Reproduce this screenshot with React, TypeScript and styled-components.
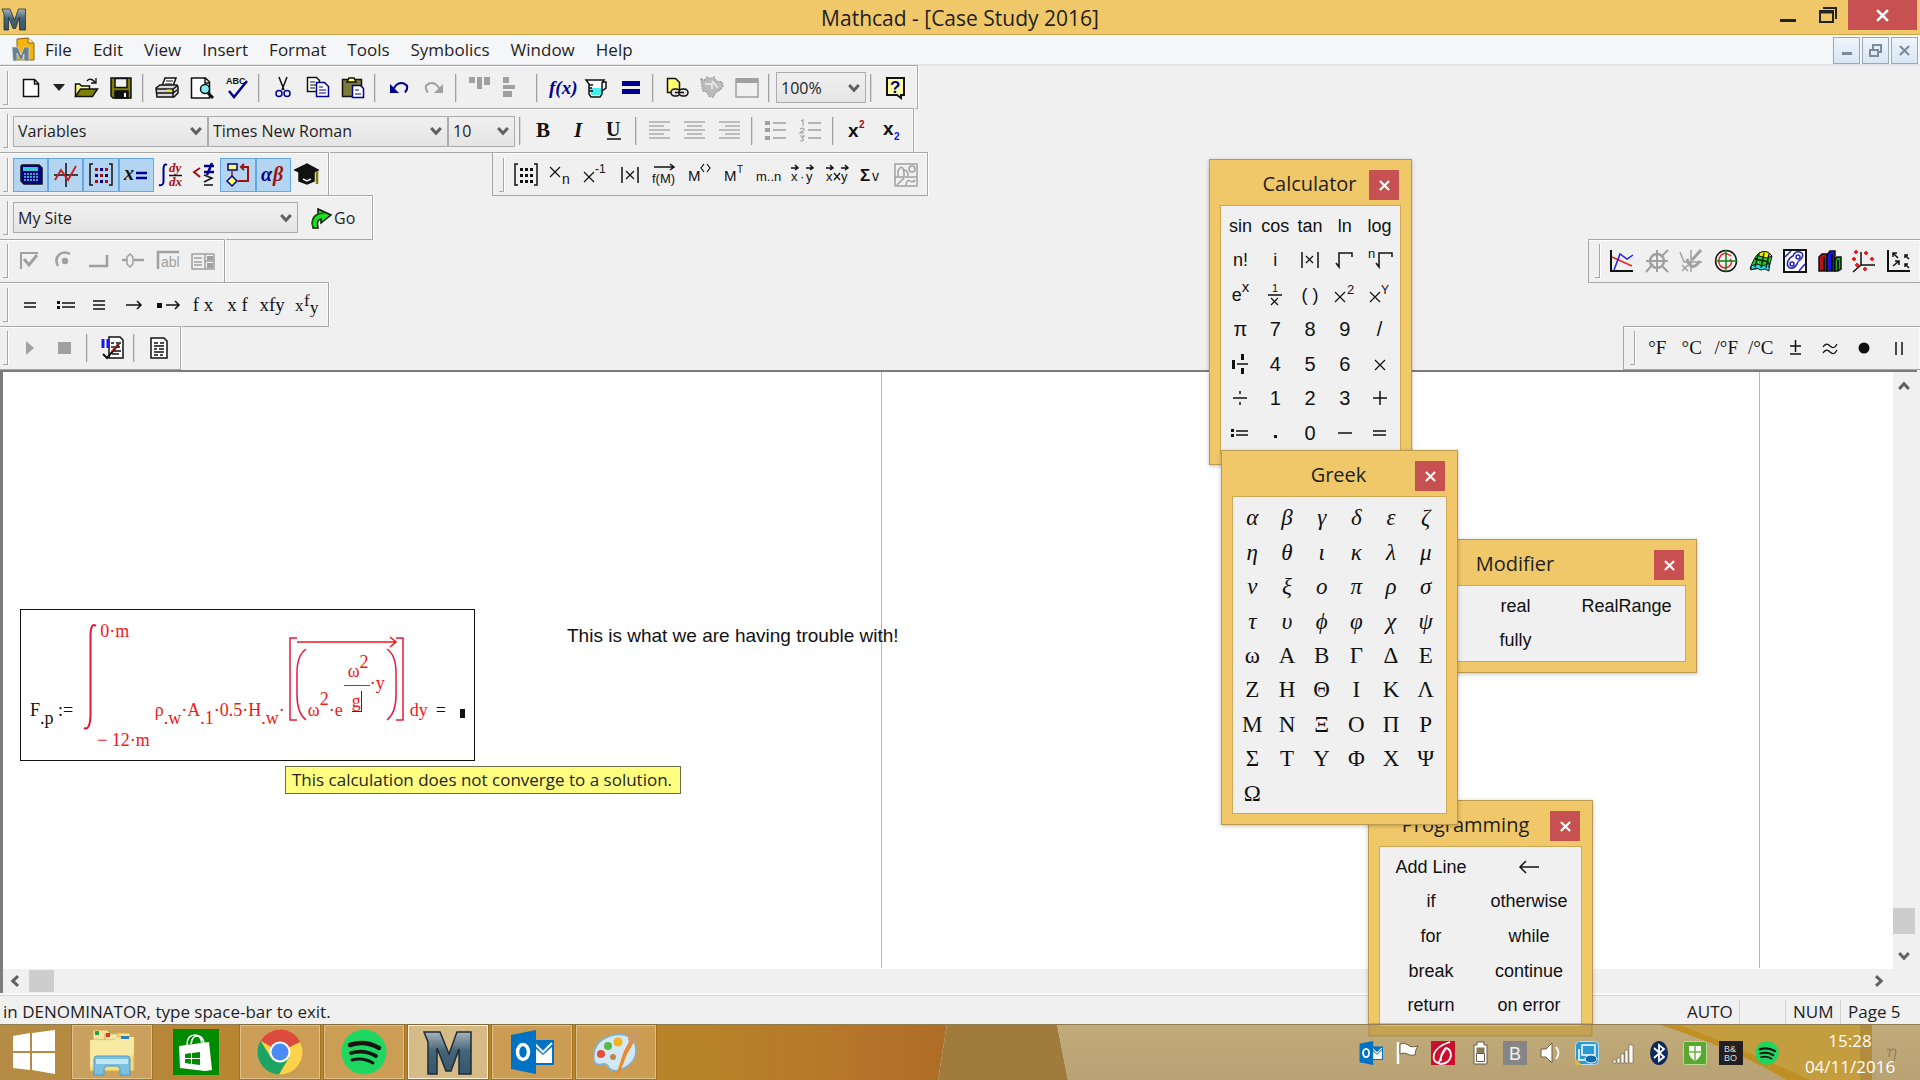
import React from "react";
import styled, { createGlobalStyle, css } from "styled-components";

const ui = `"Open Sans", "Noto Sans", sans-serif`;
const sans = `"Liberation Sans", Arial, sans-serif`;
const serif = `"Liberation Serif", "Times New Roman", serif`;
const gold = "#f0c869";
const face = "#f0f0f0";
const line = "#a6a6a6";

const Global = createGlobalStyle`
  * { box-sizing: border-box; }
  body { margin: 0; font-family: ${ui}; font-size: 17px; color: #1e1e1e; background: ${face}; overflow: hidden; }
  button { font: inherit; color: inherit; border: 0; padding: 0; background: none; }
  svg { display: block; flex: none; overflow: visible; }
`;

/* ---------- shell ---------- */

const Shell = styled.div`
  position: relative;
  display: flex;
  flex-direction: column;
  height: 100vh;
  overflow: hidden;
  background: ${face};
`;

const TitleBar = styled.header`
  display: grid;
  grid-template-columns: 1fr auto 1fr;
  height: 35px;
  flex: none;
  background: ${gold};
  border-bottom: 1px solid #c9a450;
`;

const TitleLogo = styled.div`
  padding: 7px 2px;
`;

const Title = styled.h1`
  margin: 0;
  font-size: 21px;
  font-weight: 400;
  line-height: 36px;
`;

const WindowButtons = styled.div`
  display: flex;
  justify-content: flex-end;
  padding-right: 3px;
`;

const WindowButton = styled.button<{ $close?: boolean }>`
  display: flex;
  align-items: center;
  justify-content: center;
  width: ${(p) => (p.$close ? 69 : 40)}px;
  height: 30px;
  background: ${(p) => (p.$close ? "#c75050" : "transparent")};
`;

const MenuBar = styled.nav`
  display: flex;
  align-items: center;
  gap: 21px;
  flex: none;
  height: 31px;
  padding: 1px 2px 0 12px;
  background: #f5f6f8;
  border-bottom: 2px solid #e4e5e8;
`;

const MenuItem = styled.button`
  line-height: 26px;
`;

const MenuIcon = styled.span`
  margin-right: -11px;
`;

const MdiButtons = styled.div`
  display: flex;
  gap: 2px;
  margin-left: auto;
`;

const MdiButton = styled.button`
  display: flex;
  align-items: center;
  justify-content: center;
  width: 27px;
  height: 27px;
  background: linear-gradient(#eef5fc, #d8e6f4);
  border: 1px solid #9aa9b8;
`;

/* ---------- toolbars ---------- */

const ToolArea = styled.div`
  display: grid;
  grid-template-rows: repeat(7, 1fr);
  height: 304px;
  flex: none;
`;

const ToolRow = styled.div`
  display: flex;
`;

const Toolbar = styled.div<{ $docked?: "left" | "right"; $indent?: number; $end?: number }>`
  display: flex;
  align-items: center;
  margin-top: -1px;
  margin-left: ${(p) => (p.$docked === "right" ? "auto" : `${p.$indent ?? 0}px`)};
  padding: 1px ${(p) => p.$end ?? 4}px 0 ${(p) => (p.$docked || p.$indent ? 6 : 3)}px;
  border: 1px solid ${line};
  border-left-width: ${(p) => (p.$docked || p.$indent ? 1 : 0)}px;
  border-right-width: ${(p) => (p.$docked === "right" ? 0 : 1)}px;
  box-shadow: inset 0 1px #fff, inset -1px 0 #f8f8f8, 1px 0 #fff;
`;

const Grip = styled.span`
  width: 5px;
  height: 34px;
  margin-right: 5px;
  flex: none;
  border: solid ${line};
  border-width: 0 1px 1px 0;
  box-shadow: 1px 0 #fff;
`;

const Divider = styled.span`
  width: 2px;
  height: 28px;
  margin: 0 6px 0 4px;
  flex: none;
  background: #a0a0a0;
  border-right: 1px solid #d8d8d8;
`;

const Group = styled.div<{ $count: number }>`
  display: flex;
  width: ${(p) => Math.round(p.$count * 34.5)}px;
`;

const Tool = styled.button<{ $on?: boolean }>`
  display: flex;
  align-items: center;
  justify-content: center;
  flex: 1 1 0;
  min-width: 0;
  height: 34px;
  white-space: nowrap;
  font: 19px/24px ${serif};
  color: #111;
  ${(p) =>
    p.$on &&
    css`
      background: #b3d5f2;
      border: 1px solid #63a8e6;
    `}
`;

const NarrowTool = styled.button`
  display: flex;
  justify-content: center;
  width: 21px;
`;

const GoButton = styled.button`
  display: flex;
  align-items: center;
  gap: 1px;
  margin-left: 11px;
  font-size: 16px;
`;

const SelectBox = styled.span<{ $w: number }>`
  display: grid;
  align-items: center;
  width: ${(p) => p.$w}px;
  & > * { grid-area: 1 / 1; }
  & > svg { justify-self: end; margin-right: 6px; pointer-events: none; }
`;

const Select = styled.select`
  appearance: none;
  width: 100%;
  height: 31px;
  margin: 0;
  padding: 0 4px;
  border: 1px solid #acacac;
  border-radius: 0;
  background: linear-gradient(#f0f0f0, #e5e5e5);
  font: 16px/24px ${ui};
  color: #1e1e1e;
`;

/* ---------- worksheet ---------- */

const Work = styled.main`
  display: grid;
  grid-template-columns: 1fr 24px;
  grid-template-rows: 1fr 24px;
  flex: 1;
  min-height: 0;
  margin-right: 3px;
  border: solid #7c7c7c;
  border-width: 2px 0 0 3px;
`;

const Sheet = styled.section`
  position: relative;
  overflow: hidden;
  background: #fff;
`;

const PageEdge = styled.i<{ $x: number }>`
  position: absolute;
  top: 0;
  bottom: 1px;
  left: ${(p) => p.$x}px;
  width: 1px;
  background: #b8b8b8;
`;

const Scroll = styled.div<{ $vertical?: boolean }>`
  display: flex;
  flex-direction: ${(p) => (p.$vertical ? "column" : "row")};
  justify-content: space-between;
  align-items: center;
  padding: ${(p) => (p.$vertical ? "8px 2px 7px 0" : "0 8px 0 6px")};
  background: ${face};
`;

const Thumb = styled.i<{ $vertical?: boolean }>`
  width: ${(p) => (p.$vertical ? 22 : 25)}px;
  height: ${(p) => (p.$vertical ? 26 : 22)}px;
  margin: ${(p) => (p.$vertical ? "auto 0 16px" : "0 auto 0 8px")};
  background: #cdcdcd;
`;

const Note = styled.p`
  position: absolute;
  left: 564px;
  top: 252px;
  margin: 0;
  font: 19px/24px ${sans};
  color: #111;
`;

const Hint = styled.div`
  position: absolute;
  left: 282px;
  top: 394px;
  padding: 0 8px 0 6px;
  border: 1px solid #6d6d4a;
  background: #ffff80;
  line-height: 26px;
  white-space: nowrap;
`;

/* ---------- formula region ---------- */

const Region = styled.div`
  position: absolute;
  left: 17px;
  top: 237px;
  display: flex;
  align-items: flex-end;
  height: 152px;
  padding: 0 9px 40px;
  border: 1px solid #111;
  font: 18px/20px ${serif};
  color: #111;
  white-space: nowrap;
  & sub { font-size: 18px; line-height: 0; vertical-align: -8px; }
  & sup { font-size: 18px; line-height: 0; vertical-align: 11px; }
`;

const Red = styled.span`
  color: #f01818;
`;

const Integral = styled.div`
  display: grid;
  grid-template-columns: 14px auto;
  height: 129px;
  margin: 0 5px -30px 10px;
  color: #f01818;
`;

const Limits = styled.div`
  display: flex;
  flex-direction: column;
  justify-content: space-between;
`;

const Upper = styled.span`
  padding-left: 3px;
`;

const Bracket = styled.div`
  display: grid;
  width: 117px;
  height: 85px;
  margin: 0 5px -2px 3px;
  color: #f01818;
  & > * { grid-area: 1 / 1; }
`;

const Inner = styled.div`
  display: flex;
  align-items: flex-end;
  padding: 0 0 2px 20px;
`;

const Fraction = styled.div`
  display: flex;
  flex-direction: column;
  align-items: center;
  width: 26px;
  margin: 0 0 8px 1px;
`;

const Numerator = styled.span`
  align-self: stretch;
  padding: 0 0 4px 4px;
  border-bottom: 1px solid #f01818;
  & sup { vertical-align: 9px; }
`;

const Denominator = styled.span`
  margin-top: 5px;
  border: solid #1616ff;
  border-width: 0 1px 1px 0;
`;

const Exponent = styled.span`
  margin-bottom: 27px;
`;

const Equals = styled.span`
  margin-left: 8px;
`;

const Slot = styled.i`
  width: 5px;
  height: 9px;
  margin: 0 0 2px 14px;
  background: #111;
`;

/* ---------- status bar ---------- */

const StatusBar = styled.footer`
  display: flex;
  flex: none;
  height: 31px;
  padding: 5px 20px 0 3px;
  border-top: 2px solid #fafafa;
  box-shadow: inset 0 1px #d5d5d5;
  line-height: 24px;
  white-space: nowrap;
`;

const StatusText = styled.span`
  flex: 1;
`;

const StatusCell = styled.span<{ $w: number; $plain?: boolean }>`
  width: ${(p) => p.$w}px;
  padding-left: 7px;
  border-left: 1px solid ${(p) => (p.$plain ? "transparent" : "#cfcfcf")};
`;

/* ---------- palettes ---------- */

const PaletteFrame = styled.section<{ $x: number; $y: number; $w: number; $h: number }>`
  position: absolute;
  left: ${(p) => p.$x}px;
  top: ${(p) => p.$y}px;
  width: ${(p) => p.$w}px;
  height: ${(p) => p.$h}px;
  display: flex;
  flex-direction: column;
  padding: 0 10px 10px;
  background: ${gold};
  border: 1px solid #b99a4e;
  box-shadow: 0 1px 4px rgba(0, 0, 0, 0.25);
`;

const PaletteHead = styled.header<{ $lead: number }>`
  display: grid;
  grid-template-columns: ${(p) => p.$lead}px 1fr 30px;
  align-items: start;
  height: 45px;
  padding: 10px 2px 0;
  flex: none;
`;

const PaletteTitle = styled.h2`
  grid-column: 2;
  margin: 0;
  font-size: 20px;
  font-weight: 400;
  line-height: 28px;
  text-align: center;
`;

const PaletteClose = styled.button`
  display: flex;
  align-items: center;
  justify-content: center;
  height: 30px;
  background: #c75050;
`;

const PaletteBody = styled.div<{ $cols: number }>`
  display: grid;
  grid-template-columns: repeat(${(p) => p.$cols}, 1fr);
  grid-auto-rows: 1fr;
  flex: 1;
  padding: 3px 3px 3px 2px;
  background: ${face};
  border: 1px solid #cfa955;
  font: 18px/24px ${sans};
  color: #111;
`;

const Key = styled.button<{ $face?: "greek" | "italic" | "digit" }>`
  display: flex;
  align-items: center;
  justify-content: center;
  padding-bottom: 1px;
  white-space: nowrap;
  ${(p) => p.$face === "digit" && `font-size: 20px; padding: 0;`}
  ${(p) => (p.$face === "greek" || p.$face === "italic") && `font-family: ${serif}; font-size: 23px; padding: 2px 0 0;`}
  ${(p) => p.$face === "italic" && `font-style: italic;`}
  & sup { font-size: 15px; line-height: 0; vertical-align: 9px; }
`;

/* ---------- taskbar ---------- */

const Taskbar = styled.footer`
  position: relative;
  z-index: 2;
  display: grid;
  height: 56px;
  flex: none;
  & > * { grid-area: 1 / 1; min-width: 0; }
`;

const TaskRow = styled.div`
  display: flex;
  align-items: stretch;
  gap: 4px;
  padding-top: 1px;
  z-index: 1;
`;

const TaskButton = styled.button<{ $state?: "open" | "active" }>`
  display: flex;
  align-items: center;
  justify-content: center;
  width: 80px;
  margin-bottom: 1px;
  ${(p) =>
    p.$state === "open" &&
    css`
      background: rgba(222, 184, 125, 0.5);
      border: 1px solid rgba(235, 215, 175, 0.6);
      box-shadow: 0 0 0 1px rgba(110, 75, 20, 0.3);
    `}
  ${(p) =>
    p.$state === "active" &&
    css`
      background: rgba(224, 204, 166, 0.75);
      border: 1px solid #fbf3e2;
      box-shadow: 0 0 0 1px rgba(110, 75, 20, 0.4);
    `}
`;

const StartButton = styled(TaskButton)`
  width: 68px;
`;

const Tray = styled.div`
  display: flex;
  align-items: center;
  gap: 12px;
  margin: 0 21px 0 auto;
`;

const Clock = styled.time`
  width: 98px;
  margin-left: 10px;
  font-size: 17px;
  line-height: 26px;
  padding-top: 2px;
  text-align: center;
  color: #fff;
`;

/* ---------- drawings ---------- */

type Kids = { children?: React.ReactNode };
const Ic = ({ children }: Kids) => (
  <svg width="24" height="24" viewBox="0 0 24 24" fill="none" stroke="#111" strokeWidth="1.5" aria-hidden="true">
    {children}
  </svg>
);
const T = ({ x, y, s = 14, c = "#111", w = "400", i, f = sans, children }: any) => (
  <text x={x} y={y} fontSize={s} fill={c} stroke="none" fontWeight={w} fontStyle={i ? "italic" : "normal"} fontFamily={f}>
    {children}
  </text>
);
const G = "#a0a0a0";
const NAVY = "#000090";

const Chevron = ({ r = 0, c = "#606060" }: { r?: number; c?: string }) => (
  <svg width="12" height="12" viewBox="0 0 12 12" fill="none" stroke={c} strokeWidth="3" aria-hidden="true">
    <path d="M1.2 3l4.8 5.2L10.800 3" transform={`rotate(${r} 6 6)`} />
  </svg>
);

const MLogo = ({ size, id }: { size: number; id: string }) => (
  <svg width={size} height={size} viewBox="0 0 48 48" aria-hidden="true">
    <defs>
      <linearGradient id={id} x1="0" y1="0" x2="0" y2="1">
        <stop offset="0" stopColor="#a9b5bd" />
        <stop offset=".45" stopColor="#456478" />
        <stop offset="1" stopColor="#36566c" />
      </linearGradient>
    </defs>
    <path d="M0 4h16l9 22 8-22h14v42H35V21l-8 22h-5l-9-23v26H4V14z" fill={`url(#${id})`} stroke="#1c2b36" strokeWidth="1.5" />
  </svg>
);

const NewDoc = () => <Ic><path d="M4.500 3.500h11l4 4v13h-15z" fill="#fff" /><path d="M15.500 3.500v4.500h4" /></Ic>;
const Open = () => <Ic><path d="M1.500 20V8h4l2 2h8v3" fill="#ffff80" /><path d="M1.500 20.500l5-7.500h17l-5 7.500z" fill="#808000" /><path d="M13 5q3-4 8 1m1-4v5h-5" strokeWidth="1.300" /></Ic>;
const Save = () => <Ic><path d="M2 2h20v20H4l-2-2z" fill="#808000" stroke="#111" /><path d="M6 2.500h12v9H6z" fill="#f0f0f0" /><path d="M6 15h13v7H6z" fill="#111" /><path d="M15 17h2v4h-2z" fill="#fff" stroke="none" /></Ic>;
const Print = () => <Ic><path d="M7 10l3-8h11l-3 8z" fill="#fff" /><path d="M11 5h7M10 8h7" strokeWidth="1" /><path d="M1 12l4-3h17l1 2v6l-4 4H2z" fill="#d8d8d8" /><path d="M1 13h17l4-3M2 17h16l4-3M18 13v8" /><path d="M12 14.500h4" stroke="#e6e600" strokeWidth="2" /></Ic>;
const Preview = () => <Ic><path d="M1.500 2h14l4 4v16h-18z" fill="#fff" /><path d="M15 2v5h5" /><circle cx="15" cy="13" r="4.500" fill="#80f0f0" /><path d="M18 17l5 5" strokeWidth="3" /></Ic>;
const Spell = () => <Ic><T x="1" y="8" s="9" w="700">ABC</T><path d="M4 15l5 6L22 5" stroke={NAVY} strokeWidth="2.400" /></Ic>;
const Cut = () => <Ic><path d="M8 1l5 13M16 1l-5 13" /><circle cx="8" cy="17.500" r="3" stroke={NAVY} /><circle cx="16" cy="17.500" r="3" stroke={NAVY} /></Ic>;
const Copy = () => <Ic><path d="M1.500 1.500h9l3 3v11h-12z" fill="#fff" /><path d="M4 6h5M4 9h6M4 12h5" strokeWidth="1" /><path d="M10.500 6.500h8l4 4v10h-12z" fill="#fff" stroke={NAVY} /><path d="M13 11h4M13 14h7M13 17h7" stroke={NAVY} strokeWidth="1" /></Ic>;
const Paste = () => <Ic><path d="M1.500 3.500h19v17h-19z" fill="#7c7c38" /><path d="M6 6l2-4h5l2 4z" fill="#ffff60" /><path d="M11.500 9.500h8l3 3v9h-11z" fill="#fff" stroke={NAVY} /><path d="M14 14h4M14 18h6" stroke={NAVY} strokeWidth="1" /></Ic>;
const Undo = () => <Ic><path d="M6 14Q10 5 17 7.500q6 3 1 9" stroke={NAVY} strokeWidth="2" /><path d="M3 8v9h9z" fill={NAVY} stroke="none" /></Ic>;
const Redo = () => <Ic><path d="M18 14Q14 5 7 7.500q-6 3-1 9" stroke={G} strokeWidth="2" /><path d="M21 8v9h-9z" fill={G} stroke="none" /></Ic>;
const AlignTop = () => <Ic><path d="M1 1h6v6H1zM9 1h5v12H9zM16 1h6v8h-6z" fill={G} stroke="none" /></Ic>;
const AlignLeft = () => <Ic><path d="M0 1h6v6H0zM0 9h12v4H0zM0 15h9v6H0z" fill={G} stroke="none" /></Ic>;
const Fx = () => <Ic><T x="0" y="18" s="19" w="700" c={NAVY} f={serif} i>f(x)</T></Ic>;
const Cup = () => <Ic><path d="M2 4h18l-2 3v11l-2 3H7l-2-3V8z" fill="#fff" /><path d="M6 12h11v7H7z" fill="#40f0f0" stroke="none" /><path d="M18 6h4v6l-4 3M5 9h4M5 12h3M5 15h4" /></Ic>;
const EqualsIcon = () => <Ic><path d="M3 5h18v5H3zM3 13h18v5H3z" fill={NAVY} stroke="none" /></Ic>;
const LinkIcon = () => <Ic><path d="M2.500 2.500h8l4 4v10h-12z" fill="#ffff70" /><rect x="6" y="13" width="9" height="7" rx="3.500" fill="#ddd" /><rect x="14" y="13" width="9" height="7" rx="3.500" fill="#ddd" /><path d="M10 16.500h9" /></Ic>;
const Gear = () => <Ic><path d="M1 3l4 1 2-3 3 2 4-2 2 4 6 1 1 4-3 4-4 2-3 5-4-1-2-4-4-1-1-5z" fill="#bcbcbc" stroke={G} strokeDasharray="2 1" /><path d="M5 8h7v5M12 5l6 7" stroke="#eee" /></Ic>;
const WindowIcon = () => <Ic><path d="M1 3h22v18H1z" stroke={G} /><path d="M1 2h22v5H1z" fill={G} stroke="none" /></Ic>;
const HelpIcon = () => <Ic><path d="M3 2h17v17h-3v3l-4-3H3z" fill="#ffffa0" strokeWidth="2" /><T x="6" y="17" s="17" w="700" c={NAVY}>?</T></Ic>;

const Lines = ({ a }: { a: "l" | "c" | "r" }) => {
  const short = 15;
  const x = a === "l" ? 1 : a === "c" ? 4 : 7;
  return <Ic>{[3, 7, 11, 15, 19].map((y, k) => <path key={y} stroke={G} strokeWidth="1.300" d={k % 2 ? `M${x} ${y}h${short}` : `M1 ${y}h21`} />)}</Ic>;
};
const Bullets = () => <Ic>{[4, 11, 19].map((y) => <path key={y} d={`M1 ${y}h5`} stroke={G} strokeWidth="4" />)}{[4, 11, 19].map((y) => <path key={`l${y}`} d={`M9 ${y}h13`} stroke={G} />)}</Ic>;
const Numbers = () => <Ic><path d="M2 2l2-1v6M1 10q4-2 4 1l-4 3h4M1 17h4l-2 2q4 3-2 3" stroke={G} strokeWidth="1.200" />{[4, 11, 19].map((y) => <path key={y} d={`M9 ${y}h13`} stroke={G} />)}</Ic>;
const Sup = () => <Ic><T x="3" y="18" s="19" w="700">x</T><T x="14" y="9" s="10" w="700" c="#a01010">2</T></Ic>;
const Sub = () => <Ic><T x="3" y="16" s="19" w="700">x</T><T x="14" y="21" s="10" w="700" c="#1010f0">2</T></Ic>;

const CalcIcon = () => <Ic><path d="M3 2h17l3 3v16H5l-3-3V3z" fill="#000080" /><path d="M4 4h15v4H4z" fill="#40c8d0" stroke="none" /><path d="M5 11h15M5 14h15M5 17h15" stroke="#58d8d8" strokeDasharray="2 1" /></Ic>;
const GraphIcon = () => <Ic><path d="M0 12h24M12 0v24" /><path d="M1 17L7 7l7 10 8-14" stroke="#d01818" strokeWidth="1.800" /></Ic>;
const MatrixIcon = ({ c = ["#a01010", NAVY] }: { c?: string[] }) => (
  <Ic><path d="M4 1H1v21h3M20 1h3v21h-3" />{[5, 11, 17].map((y, r) => [6, 11, 16].map((x, k) => <rect key={`${x}${y}`} x={x} y={y} width="3" height="3" stroke="none" fill={c[(r + k) % 2]} />))}</Ic>
);
const XEq = () => <Ic><T x="0" y="17" s="20" w="700" i f={serif}>x</T><path d="M12 10h11M12 15h11" stroke={NAVY} strokeWidth="2.600" /></Ic>;
const Calculus = () => <Ic><path d="M9 2Q6 0 5.500 5v14Q5 23 1 22" stroke={NAVY} strokeWidth="2" /><T x="11" y="9" s="13" w="700" i c="#a01010" f={serif}>dy</T><path d="M11 12.500h13" /><T x="11" y="23" s="13" w="700" i c="#a01010" f={serif}>dx</T></Ic>;
const Bool = () => <Ic><path d="M8 5L2 9l6 5" stroke="#a01010" strokeWidth="2" /><path d="M12 3h10M12 9h10M20 0l-5 12" stroke={NAVY} strokeWidth="2.500" /><path d="M12 12l8 3-8 4M12 22h9" /></Ic>;
const Program = () => <Ic><path d="M2 1h9v6H2z" fill="#ffff60" stroke={NAVY} /><path d="M6 8v5" stroke="#a01010" /><path d="M6 13l5 5-5 5-5-5z" fill="#ffff60" stroke={NAVY} /><path d="M12 18h10V4h-7m3-3l-3 3 3 3" stroke="#a01010" strokeWidth="2" /></Ic>;
const AlphaBeta = () => <Ic><T x="0" y="18" s="20" w="700" i c={NAVY} f={serif}>α</T><T x="12" y="18" s="20" w="700" i c="#a01010" f={serif}>β</T></Ic>;
const Hat = () => <Ic><path d="M0 7l12-6 11 6-11 6z" fill="#111" /><path d="M4 10v8l8 3 7-3v-8l-7 4z" fill="#111" /><path d="M22 8v13" stroke="#808000" strokeWidth="2.500" /><path d="M8 16l4 2 4-2" stroke="#eee" /></Ic>;

const vec = "M1 5h7m-3-3l3 3-3 2";
const matrixTools: [string, React.ReactNode][] = [
  ["Matrix", <MatrixIcon c={["#111", "#111"]} />],
  ["Subscript", <Ic><path d="M1 4l10 10M11 4l-10 10" strokeWidth="1.200" /><T x="13" y="21" s="14">n</T></Ic>],
  ["Inverse", <Ic><path d="M1 9l10 10M11 9l-10 10" strokeWidth="1.200" /><T x="12" y="10" s="12">-1</T></Ic>],
  ["Determinant", <Ic><path d="M4 4v16M20 4v16" /><path d="M8 8l8 8M16 8l-8 8" strokeWidth="1.200" /></Ic>],
  ["Vectorize", <Ic><path d="M2 4h20m-4-3l4 3-4 3" /><T x="0" y="20" s="13">f(M)</T></Ic>],
  ["Column", <Ic><T x="1" y="18" s="15">M</T><path d="M17 1l-3 4 3 4M20 1l3 4-3 4" strokeWidth="1.200" /></Ic>],
  ["Transpose", <Ic><T x="3" y="18" s="15">M</T><T x="16" y="10" s="10">T</T></Ic>],
  ["Range", <Ic><T x="0" y="18" s="13">m..n</T></Ic>],
  ["Dot product", <Ic><path d={vec} /><path d={vec} transform="translate(15)" /><T x="1" y="18" s="13">x</T><T x="10" y="18" s="13">·</T><T x="16" y="18" s="13">y</T></Ic>],
  ["Cross product", <Ic><path d={vec} /><path d={vec} transform="translate(15)" /><T x="1" y="18" s="13">x</T><path d="M9 10l6 7M15 10l-6 7" strokeWidth="1.200" /><T x="16" y="18" s="13">y</T></Ic>],
  ["Vector sum", <Ic><T x="1" y="18" s="17" w="700">Σ</T><T x="13" y="18" s="14">v</T></Ic>],
  ["Picture", <Ic><path d="M1 1h22v22H1zM1 14h22" stroke={G} /><circle cx="18" cy="6" r="3" stroke={G} /><path d="M4 13V8q4-8 6 1v4M10 7q4 0 4 6M3 22l7-7M12 22q1-6 4-4t5-1" stroke={G} /></Ic>],
];

const controlTools: [string, React.ReactNode][] = [
  ["Check box", <Ic><path d="M3 20V4h17" stroke={G} strokeWidth="2" /><path d="M6 10l5 6 8-10" stroke={G} strokeWidth="3" /></Ic>],
  ["Radio", <Ic><path d="M5 17Q1 9 7 5q5-3 10 0" stroke={G} strokeWidth="2.500" /><circle cx="12" cy="12" r="3.200" fill={G} stroke="none" /></Ic>],
  ["Push button", <Ic><path d="M2 17h18V6" stroke={G} strokeWidth="2.500" /></Ic>],
  ["Slider", <Ic><path d="M0 11h5M12 11h10" stroke={G} strokeWidth="2.500" /><path d="M5 8l3-3 3 3v7l-3 3-3-3z" stroke={G} /></Ic>],
  ["Text box", <Ic><path d="M2 20V3h21" stroke={G} strokeWidth="2.500" /><T x="5" y="18" s="14" c={G}>abl</T></Ic>],
  ["List box", <Ic><path d="M1 5h22v15H1zM14 5v15M3 9h8M3 13h8M3 16h8M14 12h9" stroke={G} /><path d="M16 7h6v4h-6zM16 14h6v5h-6z" fill={G} stroke="none" /></Ic>],
];

const graphTools: [string, React.ReactNode][] = [
  ["X-Y plot", <Ic><path d="M1 1v21h22" strokeWidth="2" /><path d="M2 8l20 9" stroke="#f02020" /><path d="M4 21l6-16 7 5 6-4" stroke="#2020f0" /></Ic>],
  ["Zoom graph", <Ic><circle cx="12" cy="12" r="7" stroke={G} strokeWidth="2.500" /><path d="M1 12h22M12 1v22M1 23l7-8M17 17l6 6M17 7l6-6" stroke={G} strokeWidth="2" /></Ic>],
  ["Trace graph", <Ic><path d="M1 3l4 10h18M12 1v22M3 16l6 6M9 16l-6 6" stroke={G} /><path d="M13 11l9-10M8 10q4 14 13 2" stroke={G} strokeWidth="3" /></Ic>],
  ["Polar plot", <Ic><circle cx="12" cy="12" r="10.500" /><path d="M17 7Q8 1 5 10q-1 9 7 9 8-3 4-9" stroke="#f02020" /><path d="M1 12h22M12 1v22" stroke="#108010" /></Ic>],
  ["Surface plot", <Ic><path d="M1 20Q5 8 10 4q8-4 13 3l-3 12-7-2-6 3z" fill="#20d020" strokeWidth="1" /><path d="M10 4q8-4 13 3l-5 2-8-2z" fill="#f0f000" strokeWidth="1" /><path d="M2 17l6-2 6 2 6-3v8l-4-2-4 1-5-2-5 2z" fill="#20e0e0" strokeWidth="1" /><path d="M6 10l14 3M9 6L6 18M15 4l-3 15M20 5l-3 14" strokeWidth="1.300" /></Ic>],
  ["Contour plot", <Ic><path d="M1 1h22v22H1z" fill="#fff" strokeWidth="2" /><path d="M5 12q2-4 5-5 2-5 7-4 5 2 1 7-3 2-4 5-3 5-7 4-4-2-2-7zM2 8l6-6M16 22l6-7" stroke="#2020c0" /><circle cx="9" cy="15" r="2" stroke="#2020c0" /><circle cx="15" cy="8" r="2" stroke="#2020c0" /></Ic>],
  ["3D bar plot", <Ic><path d="M1 8l3-3h5v17H1z" fill="#c01010" /><path d="M9 6l3-4h5v20H9z" fill="#1818e0" /><path d="M17 11l2-3h4v12l-3 2h-3z" fill="#18b018" /><path d="M6 8v14M14 5v17M20 11v11" strokeWidth="2" /></Ic>],
  ["3D scatter", <Ic><path d="M9 3v13h14M9 16l-8 7" /><path d="M2 3h4M4 1v4M12 4h4M14 2v4M18 10h4M20 8v4M0 10h4M2 8v4M3 16h4M5 14v4M11 20h4M13 18v4" stroke="#f02020" strokeWidth="2" /></Ic>],
  ["Vector field", <Ic><path d="M1 1v21h22" strokeWidth="2" /><path d="M11 9L6 4m0 4V4h4M22 10l-4-4m0 3V6h3M6 17l6-5m-4 0h4v4M22 19l-4-4m0 3v-3h3" /></Ic>],
];

const evalTools: [string, React.ReactNode][] = [
  ["Evaluate", <Ic><path d="M6 10h12M6 14h12" /></Ic>],
  ["Define", <Ic><path d="M9 10h13M9 14h13" /><path d="M4 8h3v3H4zM4 13h3v3H4z" fill="#111" stroke="none" /></Ic>],
  ["Global define", <Ic><path d="M6 8h12M6 12h12M6 16h12" /></Ic>],
  ["Symbolic", <Ic><path d="M4 12h15m-4-4l4 4-4 4" /></Ic>],
  ["Symbolic keyword", <Ic><path d="M0 10h5v5H0z" fill="#111" stroke="none" /><path d="M9 12h13m-4-4l4 4-4 4" /></Ic>],
  ["Prefix", "f x"],
  ["Postfix", "x f"],
  ["Infix", "xfy"],
  ["Treefix", <Ic><T x="0" y="18" s="17" f={serif}>x</T><T x="9" y="13" s="17" f={serif}>f</T><T x="15" y="20" s="17" f={serif}>y</T></Ic>],
];

const unitTools: [string, React.ReactNode][] = [
  ["Fahrenheit", "°F"],
  ["Celsius", "°C"],
  ["Delta Fahrenheit", "/°F"],
  ["Delta Celsius", "/°C"],
  ["Plus minus", <Ic><path d="M7 10h11M12.500 4v12M7 18h11" /></Ic>],
  ["Approximately", <Ic><path d="M5 11q3-5 7-1t7-2M5 17q3-5 7-1t7-2" strokeWidth="1.300" /></Ic>],
  ["Dot", <Ic><circle cx="12" cy="12" r="5.500" fill="#111" stroke="none" /></Ic>],
  ["Parallel", <Ic><path d="M9 6v13M15 6v13" /></Ic>],
];

const DebugDoc = ({ check }: { check?: boolean }) => (
  <Ic>
    <path d={check ? "M9 1h11l3 3v18H9z" : "M4 2h13l3 3v17H4z"} fill="#fff" />
    <path d={check ? "M11 7h3m2 0h5M11 11h9M13 15h8M12 18h7" : "M7 7h4m2 0h4M7 10h10M7 13h3m2 0h5M7 16h10M7 19h4m2 0h3"} strokeWidth="1.300" />
    {check && <><path d="M3 3v9M8 3v9" stroke="#1818f0" strokeWidth="3" /><path d="M3 18l4 4L19 8" strokeWidth="2" /><path d="M12 15l6-7" stroke="#d02020" /></>}
  </Ic>
);

const CloseX = ({ s = 11, c = "#fff" }: { s?: number; c?: string }) => (
  <svg width={s} height={s} viewBox="0 0 12 12" stroke={c} strokeWidth="2.300" aria-hidden="true"><path d="M1 1l10 10M11 1L1 11" /></svg>
);

const Spotify = ({ s }: { s: number }) => (
  <svg width={s} height={s} viewBox="0 0 46 46" fill="none" stroke="#191414" strokeLinecap="round" aria-hidden="true">
    <circle cx="23" cy="23" r="22.500" fill="#1ed760" stroke="none" />
    <path d="M9 16q15-5 29 3" strokeWidth="4.500" /><path d="M10 24q13-4 25 3" strokeWidth="3.800" /><path d="M11 31q11-3 21 3" strokeWidth="3" />
  </svg>
);

const Outlook = ({ s }: { s: number }) => (
  <svg width={s} height={s} viewBox="0 0 44 44" aria-hidden="true">
    <path d="M24 11h19v23H24z" fill="#fff" stroke="#0072c6" strokeWidth="2" /><path d="M24 11h19v5L33 25l-9-8z" fill="#0072c6" /><path d="M25 14l8 8 9-9" stroke="#fff" strokeWidth="2" fill="none" />
    <path d="M1 5l25-5v44L1 39z" fill="#0072c6" /><ellipse cx="13" cy="22" rx="5.500" ry="7.500" fill="none" stroke="#fff" strokeWidth="3.500" />
  </svg>
);

const WinLogo = () => (
  <svg width="44" height="44" viewBox="0 0 44 44" fill="#fff" aria-hidden="true"><path d="M1 6l17-3v18H1zM20 3l23-3v21H20zM1 23h17v17L1 38zM20 23h23v21l-23-4z" /></svg>
);
const Explorer = () => (
  <svg width="48" height="48" viewBox="0 0 48 48" aria-hidden="true">
    <path d="M5 6V2h14l3 3h20v20H5z" fill="#f6e29a" stroke="#c9a84a" /><path d="M7 3h4v4H7z" fill="#1fa04a" /><path d="M17 9V6h12l2 3h15v20H17z" fill="#f9e9a8" stroke="#c9a84a" /><path d="M18 5h4v4h-4z" fill="#d03a20" />
    <path d="M2 12h24l3-3h17v34H2z" fill="#f3dc7c" stroke="#d1b04e" /><path d="M2 12h24l3-3h17v18L2 40z" fill="#fbf0b4" opacity=".7" /><path d="M33 8h8v3h-8z" fill="#2a7fc0" />
    <path d="M6 47V31q0-3 3-3h30q3 0 3 3v16H32v-6q0-3-3-3H19q-3 0-3 3v6z" fill="#7cc1e4" stroke="#4a9ac8" /><path d="M8 31h32v5H8z" fill="#c2e6f6" />
  </svg>
);
const Store = () => (
  <svg width="46" height="46" viewBox="0 0 46 46" aria-hidden="true">
    <path d="M0 0h46v46H0z" fill="#008a00" /><path d="M6 17l30-4 3 28-7 1-25-3z" fill="#fff" /><path d="M14 16q0-10 8-10 6 0 7 9M18 15q1-9 8-8 4 1 5 7" fill="none" stroke="#fff" strokeWidth="1.500" />
    <path d="M12 25l6-1v5h-6zM19 24l8-1v6h-8zM12 30h6v5l-6-1zM19 30h8v6l-8-1z" fill="#008a00" />
  </svg>
);
const Chrome = () => (
  <svg width="46" height="46" viewBox="0 0 46 46" aria-hidden="true">
    <circle cx="23" cy="23" r="22.500" fill="#fdd24b" /><path d="M23 23L3.500 11.700A22.500 22.500 0 0 1 43 13z" fill="#dd4b3e" /><path d="M23 13h20A22 22 0 0 0 23 .5z" fill="#dd4b3e" /><path d="M3.500 11.700A22.500 22.500 0 0 0 22 45.500l10-17-18 0z" fill="#1da362" />
    <circle cx="23" cy="23" r="10.500" fill="#fff" /><circle cx="23" cy="23" r="8.500" fill="#4c8bf5" />
  </svg>
);
const Paint = () => (
  <svg width="48" height="48" viewBox="0 0 48 48" aria-hidden="true">
    <path d="M2 32Q0 14 18 8q20-5 25 8 4 15-9 23-12 7-17 1-2-5-6-4-8 2-9-4z" fill="#d3e8f5" stroke="#7fb0d0" strokeWidth="1.500" />
    <circle cx="9" cy="26" r="4" fill="#e0503a" /><circle cx="16" cy="18" r="4" fill="#58b947" /><circle cx="26" cy="14" r="4.500" fill="#f4b41a" /><circle cx="21" cy="29" r="3" fill="#b78a4a" />
    <path d="M24 47l8-24 6-11 4 2-7 12-8 21z" fill="#e88a2e" /><path d="M36 12q-1-8 7-12 0 5 4 6-2 8-9 9z" fill="#c99a66" />
  </svg>
);

const Ti = ({ children, w = 24 }: Kids & { w?: number }) => (
  <svg width={w} height="24" viewBox="0 0 24 24" fill="none" aria-hidden="true">{children}</svg>
);

const Wallpaper = () => (
  <svg width="100%" height="56" viewBox="0 0 1920 56" preserveAspectRatio="none" aria-hidden="true">
    <defs>
      <linearGradient id="amber" x1="0" x2="1" y1="0" y2="0">
        <stop offset="0" stopColor="#b58c46" /><stop offset=".3" stopColor="#b9842e" /><stop offset=".75" stopColor="#b88228" /><stop offset=".9" stopColor="#b5762a" /><stop offset="1" stopColor="#ae6c26" />
      </linearGradient>
      <linearGradient id="sand" x1="0" x2="0" y1="0" y2="1"><stop offset="0" stopColor="#c2ab7a" /><stop offset="1" stopColor="#b8a273" /></linearGradient>
    </defs>
    <path d="M0 0h947l-9 56H0z" fill="url(#amber)" />
    <path d="M947 0h110l11 56H938z" fill="#9f7c3c" />
    <path d="M1057 0h863v56H1068z" fill="url(#sand)" />
    <path d="M1658 0h214v56h-85q-50-30-129-56z" fill="#c39d3e" />
    <path d="M1658 0h18q60 22 134 56h-23q-50-30-129-56z" fill="#bf8f24" />
    <path d="M1860 0h12v56h-12z" fill="#b08c3c" />
    <path d="M1369 0h223v12h-223z" fill="#c4a252" stroke="#a48a48" />
    <path d="M1380 0h201v2h-201z" fill="#c8bd9c" />
    <path d="M0 .5h1920" stroke="#8f7c50" />
    <path d="M1887 26q2-2 3 0l-1 7m1-6q5-4 6 0l-2 10" fill="none" stroke="#8d7d58" strokeWidth="1.200" />
  </svg>
);

/* ---------- composed parts ---------- */

type ToolDef = [string, React.ReactNode, boolean?];
const Tools = ({ items }: { items: ToolDef[] }) => (
  <Group $count={items.length}>
    {items.map(([name, icon, on]) => (
      <Tool key={name} type="button" aria-label={name} $on={on}>{icon}</Tool>
    ))}
  </Group>
);

const Combo = ({ label, value, w }: { label: string; value: string; w: number }) => (
  <SelectBox $w={w}>
    <Select aria-label={label} defaultValue={value}><option>{value}</option></Select>
    <Chevron />
  </SelectBox>
);

type PaletteProps = Kids & { title: string; x: number; y: number; w: number; h: number; cols: number; lead?: number };
const Palette = ({ title, x, y, w, h, cols, lead = 28, children }: PaletteProps) => (
  <PaletteFrame $x={x} $y={y} $w={w} $h={h} aria-label={title}>
    <PaletteHead $lead={lead}>
      <PaletteTitle>{title}</PaletteTitle>
      <PaletteClose type="button" aria-label={`Close ${title}`}><CloseX /></PaletteClose>
    </PaletteHead>
    <PaletteBody $cols={cols}>{children}</PaletteBody>
  </PaletteFrame>
);

const root = "M3 15l3 4V5h13v4";
const calcKeys: React.ReactNode[] = [
  "sin", "cos", "tan", "ln", "log",
  "n!", "i", <Ic><path d="M4 4v16M20 4v16" /><path d="M8 8l7 7M15 8l-7 7" strokeWidth="1.200" /></Ic>, <Ic><path d={root} /></Ic>,
  <Ic><T x="0" y="10" s="13">n</T><path d={root} transform="translate(5)" /></Ic>,
  <span>e<sup>x</sup></span>, <Ic><T x="9" y="9" s="11">1</T><path d="M5 12h14" /><path d="M8 15l7 7M15 15l-7 7" strokeWidth="1.200" /></Ic>, "( )",
  <Ic><path d="M2 9l10 10M12 9L2 19" strokeWidth="1.200" /><T x="14" y="11" s="13">2</T></Ic>,
  <Ic><path d="M2 9l10 10M12 9L2 19" strokeWidth="1.200" /><T x="13" y="11" s="12">Y</T></Ic>,
  "π", "7", "8", "9", "/",
  <Ic><path d="M4 8h3v9H4zM13 2h3v6h-3zM13 16h3v6h-3z" fill="#111" stroke="none" /><path d="M9 12h11" /></Ic>, "4", "5", "6",
  <Ic><path d="M7 8l10 10M17 8L7 18" strokeWidth="1.200" /></Ic>,
  <Ic><path d="M5 12h14M12 5v3M12 16v3" /></Ic>, "1", "2", "3", <Ic><path d="M5 12h14M12 5v14" /></Ic>,
  <Ic><path d="M8 10h12M8 14h12" /><path d="M3 8h3v3H3zM3 13h3v3H3z" fill="#111" stroke="none" /></Ic>, <Ic><path d="M11 14h3v3h-3z" fill="#111" stroke="none" /></Ic>, "0",
  <Ic><path d="M5 12h14" /></Ic>, <Ic><path d="M5 10h13M5 14h13" /></Ic>,
];

const lower = [..."αβγδεζηθικλμνξοπρστυϕφχψ"];
const upper = [..."ωΑΒΓΔΕΖΗΘΙΚΛΜΝΞΟΠΡΣΤΥΦΧΨΩ"];
const arrow = <svg width="20" height="14" viewBox="0 0 20 14" fill="none" stroke="#111" strokeWidth="1.500" aria-label="Local definition"><path d="M20 7H1m6-6L1 7l6 6" /></svg>;
const programming: React.ReactNode[] = ["Add Line", arrow, "if", "otherwise", "for", "while", "break", "continue", "return", "on error"];
const menus = ["File", "Edit", "View", "Insert", "Format", "Tools", "Symbolics", "Window", "Help"];

export default function App() {
  return (
    <Shell>
      <Global />
      <TitleBar>
        <TitleLogo><MLogo size={24} id="mt" /></TitleLogo>
        <Title>Mathcad - [Case Study 2016]</Title>
        <WindowButtons>
          <WindowButton type="button" aria-label="Minimize"><svg width="16" height="16" viewBox="0 0 16 16"><path d="M0 12h16v3H0z" fill="#222" /></svg></WindowButton>
          <WindowButton type="button" aria-label="Restore"><svg width="18" height="16" viewBox="0 0 18 16" fill="none" stroke="#222" strokeWidth="2"><path d="M1 4h13v11H1zM4 1h13v11" /><path d="M1 5h13" strokeWidth="3" /></svg></WindowButton>
          <WindowButton type="button" aria-label="Close" $close><CloseX s={13} /></WindowButton>
        </WindowButtons>
      </TitleBar>

      <MenuBar>
        <MenuIcon>
          <svg width="23" height="24" viewBox="0 0 23 24" aria-hidden="true">
            <path d="M5 1l11-1 6 5v17H5z" fill="#f5b40c" stroke="#8a6410" /><path d="M16 0v5h6" fill="#ffe9a0" stroke="#8a6410" />
            <path d="M0 9h6l3 8 3-8h5v14h-5v-7l-2 6H8l-3-7v8H1z" fill="#6c7f8c" stroke="#e8eef2" strokeWidth=".6" />
          </svg>
        </MenuIcon>
        {menus.map((m) => <MenuItem key={m} type="button">{m}</MenuItem>)}
        <MdiButtons>
          <MdiButton type="button" aria-label="Minimize document"><svg width="10" height="12" viewBox="0 0 10 12"><path d="M0 8h10v3H0z" fill="#7b8b9a" /></svg></MdiButton>
          <MdiButton type="button" aria-label="Restore document"><svg width="13" height="13" viewBox="0 0 13 13" fill="none" stroke="#7b8b9a" strokeWidth="2"><path d="M1 6h8v6H1zM4 5V1h8v7h-3" /></svg></MdiButton>
          <MdiButton type="button" aria-label="Close document"><CloseX s={11} c="#7b8b9a" /></MdiButton>
        </MdiButtons>
      </MenuBar>

      <ToolArea>
        <ToolRow>
          <Toolbar>
            <Grip />
            <Tools items={[["New", <NewDoc />]]} />
            <NarrowTool type="button" aria-label="New from template"><svg width="12" height="7" viewBox="0 0 12 7"><path d="M0 0h12L6 7z" fill="#222" /></svg></NarrowTool>
            <Tools items={[["Open", <Open />], ["Save", <Save />]]} />
            <Divider />
            <Tools items={[["Print", <Print />], ["Preview", <Preview />], ["Spelling", <Spell />]]} />
            <Divider />
            <Tools items={[["Cut", <Cut />], ["Copy", <Copy />], ["Paste", <Paste />]]} />
            <Divider />
            <Tools items={[["Undo", <Undo />], ["Redo", <Redo />]]} />
            <Divider />
            <Tools items={[["Align across", <AlignTop />], ["Align down", <AlignLeft />]]} />
            <Divider />
            <Tools items={[["Insert function", <Fx />], ["Insert unit", <Cup />], ["Calculate", <EqualsIcon />]]} />
            <Divider />
            <Tools items={[["Insert hyperlink", <LinkIcon />], ["Component", <Gear />], ["Run control", <WindowIcon />]]} />
            <Divider />
            <Combo label="Zoom" value="100%" w={90} />
            <Divider />
            <Tools items={[["Help", <HelpIcon />]]} />
          </Toolbar>
        </ToolRow>
        <ToolRow>
          <Toolbar>
            <Grip />
            <Combo label="Style" value="Variables" w={195} />
            <Combo label="Font" value="Times New Roman" w={240} />
            <Combo label="Font size" value="10" w={67} />
            <Divider />
            <Tools items={[
              ["Bold", <Ic><T x="4" y="18" s="21" w="700" f={serif}>B</T></Ic>],
              ["Italic", <Ic><T x="7" y="18" s="21" w="700" i f={serif}>I</T></Ic>],
              ["Underline", <Ic><T x="4" y="17" s="20" w="700" f={serif}>U</T><path d="M5 20h14" /></Ic>],
            ]} />
            <Divider />
            <Tools items={[["Left", <Lines a="l" />], ["Center", <Lines a="c" />], ["Right", <Lines a="r" />]]} />
            <Divider />
            <Tools items={[["Bullets", <Bullets />], ["Numbering", <Numbers />]]} />
            <Divider />
            <Tools items={[["Superscript", <Sup />], ["Subscript", <Sub />]]} />
          </Toolbar>
        </ToolRow>
        <ToolRow>
          <Toolbar>
            <Grip />
            <Tools items={[
              ["Calculator palette", <CalcIcon />, true], ["Graph palette", <GraphIcon />, true], ["Matrix palette", <MatrixIcon />, true], ["Evaluation palette", <XEq />, true],
              ["Calculus palette", <Calculus />], ["Boolean palette", <Bool />], ["Programming palette", <Program />, true], ["Greek palette", <AlphaBeta />, true], ["Symbolic palette", <Hat />],
            ]} />
          </Toolbar>
          <Toolbar $indent={163}><Grip /><Tools items={matrixTools} /></Toolbar>
        </ToolRow>
        <ToolRow>
          <Toolbar $end={17}>
            <Grip />
            <Combo label="Resource" value="My Site" w={285} />
            <GoButton type="button">
              <Ic><path d="M4 22Q1 12 9 8V3l13 6-10 8v-4q-5 1-3 9z" fill="#20e020" /><path d="M4 22Q1 12 9 8l6-1" stroke="#106010" /></Ic>
              Go
            </GoButton>
          </Toolbar>
        </ToolRow>
        <ToolRow>
          <Toolbar><Grip /><Tools items={controlTools} /></Toolbar>
          <Toolbar $docked="right"><Grip /><Tools items={graphTools} /></Toolbar>
        </ToolRow>
        <ToolRow>
          <Toolbar><Grip /><Tools items={evalTools} /></Toolbar>
        </ToolRow>
        <ToolRow>
          <Toolbar>
            <Grip />
            <Tools items={[["Run", <Ic><path d="M8 5l8 7-8 7z" fill={G} stroke="none" /></Ic>], ["Stop", <Ic><path d="M5 6h13v12H5z" fill={G} stroke="none" /></Ic>]]} />
            <Divider />
            <Tools items={[["Check", <DebugDoc check />]]} />
            <Divider />
            <Tools items={[["Trace window", <DebugDoc />]]} />
          </Toolbar>
          <Toolbar $docked="right"><Grip /><Tools items={unitTools} /></Toolbar>
        </ToolRow>
      </ToolArea>

      <Work>
        <Sheet>
          <PageEdge $x={878} />
          <PageEdge $x={1756} />
          <Region>
            <span>F<sub>.p</sub> :=</span>
            <Integral>
              <svg width="13" height="110" viewBox="0 0 13 110" fill="none" stroke="#e0183c" strokeWidth="2" aria-label="integral"><path d="M13 5Q8 1 7.500 14v80Q7 110 1 107" /></svg>
              <Limits><Upper>0·m</Upper><span>− 12·m</span></Limits>
            </Integral>
            <Red>ρ<sub>.w</sub>·A<sub>.1</sub>·0.5·H<sub>.w</sub>·</Red>
            <Bracket>
              <svg width="117" height="85" viewBox="0 0 117 85" fill="none" stroke="#e8183c" strokeWidth="1.500" aria-hidden="true">
                <path d="M9 1H2v82h7M108 1h7v82h-7" /><path d="M9 5h99m-6-5l6 5-6 5" stroke="#f01818" /><path d="M18 12Q9 18 9 36v22q0 18 9 25M99 12q9 6 9 24v22q0 18-9 25" />
              </svg>
              <Inner>
                <span>ω<sup>2</sup>·e</span>
                <Fraction><Numerator>ω<sup>2</sup></Numerator><Denominator>g</Denominator></Fraction>
                <Exponent>·y</Exponent>
              </Inner>
            </Bracket>
            <Red>dy</Red>
            <Equals>=</Equals>
            <Slot />
          </Region>
          <Note>This is what we are having trouble with!</Note>
          <Hint role="tooltip">This calculation does not converge to a solution.</Hint>
        </Sheet>
        <Scroll $vertical><Chevron r={180} /><Thumb $vertical /><Chevron /></Scroll>
        <Scroll><Chevron r={90} /><Thumb /><Chevron r={-90} /></Scroll>
      </Work>

      <StatusBar>
        <StatusText>in DENOMINATOR, type space-bar to exit.</StatusText>
        <StatusCell $w={60} $plain>AUTO</StatusCell>
        <StatusCell $w={46} />
        <StatusCell $w={55}>NUM</StatusCell>
        <StatusCell $w={60}>Page 5</StatusCell>
      </StatusBar>

      <Palette title="Calculator" x={1209} y={159} w={203} h={306} cols={5}>
        {calcKeys.map((k, i) => <Key key={i} type="button" $face={i >= 15 ? "digit" : undefined}>{k}</Key>)}
      </Palette>
      <Palette title="Modifier" x={1335} y={539} w={362} h={134} cols={3}>
        {["", "real", "RealRange", "", "fully"].map((k, i) => (k ? <Key key={i} type="button">{k}</Key> : <span key={i} />))}
      </Palette>
      <Palette title="Programming" x={1368} y={800} w={225} h={238} cols={2} lead={0}>
        {programming.map((k, i) => <Key key={i} type="button">{k}</Key>)}
      </Palette>
      <Palette title="Greek" x={1221} y={450} w={237} h={375} cols={6}>
        {lower.map((k) => <Key key={k} type="button" $face="italic">{k}</Key>)}
        {upper.map((k) => <Key key={k} type="button" $face="greek">{k}</Key>)}
      </Palette>

      <Taskbar>
        <Wallpaper />
        <TaskRow>
          <StartButton type="button" aria-label="Start"><WinLogo /></StartButton>
          <TaskButton type="button" aria-label="File Explorer" $state="open"><Explorer /></TaskButton>
          <TaskButton type="button" aria-label="Store"><Store /></TaskButton>
          <TaskButton type="button" aria-label="Chrome" $state="open"><Chrome /></TaskButton>
          <TaskButton type="button" aria-label="Spotify" $state="open"><Spotify s={46} /></TaskButton>
          <TaskButton type="button" aria-label="Mathcad" $state="active"><MLogo size={48} id="mb" /></TaskButton>
          <TaskButton type="button" aria-label="Outlook" $state="open"><Outlook s={44} /></TaskButton>
          <TaskButton type="button" aria-label="Paint" $state="open"><Paint /></TaskButton>
          <Tray>
            <Outlook s={24} />
            <Ti><path d="M3 1v22" stroke="#fff" strokeWidth="2.500" /><path d="M5 3q5-2 8 1t10 1q-3 4-3 9-5 1-8-1t-7 0z" fill="#fff" stroke="#665c46" /></Ti>
            <Ti><path d="M0 0h24v24H0z" fill="#c8102e" /><path d="M19 1Q6 5 3 13q-2 8 6 10 9 0 11-8 0-7-5-8-5 8-6 12t-3 2M15 7q-6 6-5 13" stroke="#fff" strokeWidth="1.800" /></Ti>
            <Ti><path d="M10 1h7v3h3v19H7V4h3z" fill="#fff" stroke="#665c46" /><path d="M9.500 6.500h8v6h-8z" fill="#8a7a58" /><path d="M9.500 12.500h8v8h-8z" fill="#fff" stroke="#665c46" /></Ti>
            <Ti><path d="M0 0h24v24H0z" fill="#858585" /><T x="6" y="19" s="18" c="#f0f0f0">B</T></Ti>
            <Ti><path d="M2 8h5l6-6v20l-6-6H2z" fill="#fff" stroke="#665c46" /><path d="M17 6q5 6 0 12" stroke="#fff" strokeWidth="1.800" /></Ti>
            <Ti><rect x=".5" y=".5" width="23" height="23" rx="4" fill="#2a9ad6" stroke="#b9dcf0" /><path d="M7 4h13v10H7zM4 8v11h11" stroke="#fff" strokeWidth="1.500" /><ellipse cx="16" cy="18" rx="6" ry="4" fill="#0b6cb0" stroke="#fff" /><path d="M0 24v-7l7 7z" fill="#e9b63c" /></Ti>
            <Ti><path d="M2 19h3v3H2zM6 17h3v5H6zM10 13h3v9h-3zM14 9h3v13h-3zM18 4h4v18h-4z" fill="#fff" stroke="#665c46" strokeWidth=".6" /></Ti>
            <Ti><ellipse cx="12" cy="12" rx="9" ry="12" fill="#0a2a5e" /><path d="M7 7l10 9-5 4V4l5 4-10 9" stroke="#fff" strokeWidth="1.800" /></Ti>
            <Ti><rect x=".5" y=".5" width="23" height="23" rx="2" fill="#5aa832" stroke="#b8dc98" /><path d="M6 5h12v8q-2 5-6 7-4-2-6-7z" fill="#fff" /><path d="M12 4v17M5 11h14" stroke="#6ab43e" strokeWidth="1.500" /></Ti>
            <Ti><path d="M0 0h24v24H0z" fill="#231f20" /><T x="5" y="11" s="9" c="#ddd">B&amp;</T><T x="5" y="20" s="9" c="#ddd">BO</T></Ti>
            <Spotify s={24} />
            <Clock>15:28<br />04/11/2016</Clock>
          </Tray>
        </TaskRow>
      </Taskbar>
    </Shell>
  );
}
